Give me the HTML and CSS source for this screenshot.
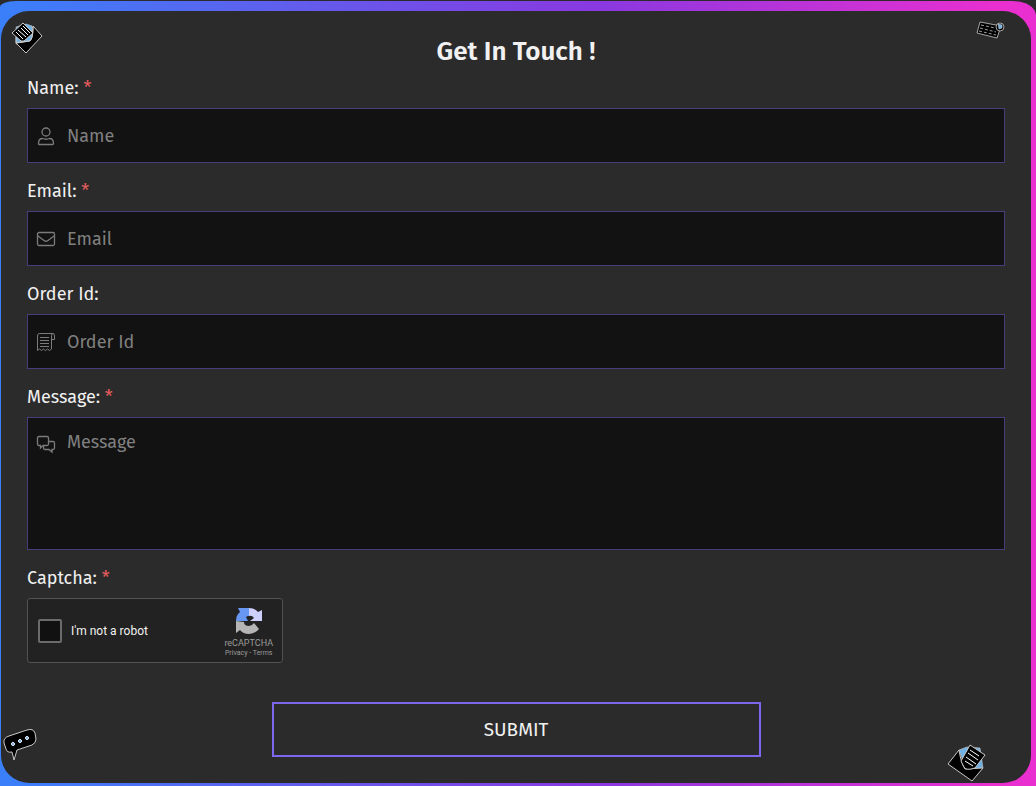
FILE: index.html
```html
<!DOCTYPE html>
<html lang="en">
<head>
	<meta charset="utf-8">
	<meta name="viewport" content="width=device-width, initial-scale=1">
	<title>Get In Touch</title>
	<link rel="stylesheet" href="styles.css">
</head>
<body>

<div class="frame">
	<main class="card">
		<!-- corner decorations -->
		<svg class="deco deco-letter" viewBox="0 0 32 32" aria-hidden="true">
			<path class="sky" d="M5 5L15 2L21 4L22 20L5 22Z"/>
			<path class="ink" d="M22 4L31 14L15 31L5 21L19 19Q22 17 22 4Z"/>
			<path class="ink" d="M1 11L12 1L22 11L13 19L10 19Z"/>
			<path class="lines" d="M5 10L12 17M7 8L15 15M10 6L17 13M12 4L19 11"/>
			<path class="edge" d="M5 15V21L18 19Q22 18 22 5"/>
		</svg>
		<svg class="deco deco-keys" viewBox="0 0 30 20" aria-hidden="true">
			<path class="ink" d="M4 2L25 6L21 18L1 13Z"/>
			<path class="dashes" d="M5 5L19 8M4 8L20 12M3 11L20 15"/>
			<circle class="ink" cx="24" cy="7" r="4"/>
			<path class="sky" d="M22 4L26 5V8L23 9Z"/>
		</svg>
		<svg class="deco deco-chat" viewBox="0 0 36 36" aria-hidden="true">
			<path class="ink" d="M7 9L25 3Q31 1 33 6L34 12Q34 16 30 18L15 23L12 33L10 25Q5 26 4 22L2 16Q1 11 7 9Z"/>
			<circle class="dot" cx="11" cy="17" r="1.500"/>
			<circle class="dot" cx="18" cy="14" r="1.500"/>
			<circle class="dot" cx="25" cy="11" r="1.500"/>
		</svg>
		<svg class="deco deco-mail" viewBox="0 0 40 40" aria-hidden="true">
			<path class="sky" d="M12 7L20 4L33 5L36 25L19 26Z"/>
			<path class="ink" d="M12 7L1 21L25 38L36 25L18 26Q14 20 12 7Z"/>
			<path class="ink" d="M23 2L38 12L28 25Q19 28 17 24L14 18Z"/>
			<path class="lines" d="M23 7L32 13M21 10L31 17M19 14L29 21M18 18L26 23"/>
		</svg>

		<h1 class="title">Get In Touch !</h1>

		<form class="form" action="#" method="post">
			<label class="label" for="name">Name: <span class="required">*</span></label>
			<div class="field">
				<svg class="icon" viewBox="0 0 20 20" aria-hidden="true">
					<circle cx="10" cy="6" r="4"/>
					<path d="M3 18.500Q2.500 18.500 2.500 17.500Q2.500 12.500 6.500 12.500Q10 14 13.500 12.500Q17.500 12.500 17.500 17.500Q17.500 18.500 16.500 18.500Z"/>
				</svg>
				<input class="input" type="text" id="name" name="name" placeholder="Name" required>
			</div>

			<label class="label" for="email">Email: <span class="required">*</span></label>
			<div class="field">
				<svg class="icon" viewBox="0 0 20 20" aria-hidden="true">
					<rect x="1.500" y="3.500" width="17" height="13" rx="1.500"/>
					<path d="M2 7L8 11.500Q10 13 12 11.500L18 7"/>
				</svg>
				<input class="input" type="email" id="email" name="email" placeholder="Email" required>
			</div>

			<label class="label" for="order">Order Id:</label>
			<div class="field">
				<svg class="icon icon-thin" viewBox="0 0 20 20" aria-hidden="true">
					<path d="M3.500 1.500H17M3.500 1.500Q1.500 1.500 1.500 4V18.500L3.500 17L5.500 18.500L7.500 17L9.500 18.500L11.500 17L13.500 18.500L15.500 17V3.500Q15.500 1.500 17 1.500Q18.500 1.500 18.500 4V7.500H15.500M4 5.500H13M4 8.500H13M4 11.500H13M4 14.500H13"/>
				</svg>
				<input class="input" type="text" id="order" name="order" placeholder="Order Id">
			</div>

			<label class="label" for="message">Message: <span class="required">*</span></label>
			<div class="field field-message">
				<svg class="icon" viewBox="0 0 20 20" aria-hidden="true">
					<path d="M7 11.500L4.500 14V11.500H3Q1.500 11.500 1.500 10V4Q1.500 2.500 3 2.500H11Q12.500 2.500 12.500 4V10Q12.500 11.500 11 11.500Z"/>
					<path d="M12.500 7.500H17Q18.500 7.500 18.500 9V14Q18.500 15.500 17 15.500H16V18L13 15.500H9Q7.500 15.500 7.500 14V11.500"/>
				</svg>
				<textarea class="input" id="message" name="message" placeholder="Message" required></textarea>
			</div>

			<label class="label" for="robot">Captcha: <span class="required">*</span></label>
			<div class="captcha">
				<input class="captcha-box" type="checkbox" id="robot" name="robot">
				<label class="captcha-text" for="robot">I'm not a robot</label>
				<div class="captcha-brand">
					<svg class="captcha-logo" viewBox="0 0 26 26" aria-hidden="true">
						<path fill="#6796f3" d="M13 0V8Q11 8 10 9L12 13H0Q0 7 4 4L2 0Z"/>
						<path fill="#cdd0fa" d="M13 0Q19 0 22 4L26 2V13H14L18 10Q16 7 13 8Z"/>
						<path fill="#b5b5b5" d="M0 13L8 14Q8 18 13 18Q16 18 18 15L23 21Q19 26 13 26Q7 26 4 22L0 25Z"/>
					</svg>
					<span class="captcha-name">reCAPTCHA</span>
					<span class="captcha-links"><a href="#privacy">Privacy</a> - <a href="#terms">Terms</a></span>
				</div>
			</div>

			<button class="submit" type="submit">SUBMIT</button>
		</form>
	</main>
</div>

</body>
</html>
```
FILE: styles.css
```css
* {
	box-sizing: border-box;
}
body {
	margin: 0;
	padding-top: 1px;
	background: #2b2b2b;
	color: #f1f1f1;
	font-family: "Fira Sans", "Noto Sans", sans-serif;
	font-size: 18px;
}
.frame {
	padding: 10px 5px 3px 1px;
	border-radius: 16px 24px 0 0 / 6px 14px 0 0;
	background: linear-gradient(90deg, #3a80fa, #8a38e0 58%, #e92fd0 96%);
}
.card {
	position: relative;
	padding: 25px 26px 26px;
	border-radius: 28px;
	background: #2b2b2b;
}
.title {
	margin: 0 0 8px;
	font-size: 26px;
	font-weight: 600;
	line-height: 32px;
	text-align: center;
}
.form {
	display: flex;
	flex-direction: column;
}
.label {
	margin-bottom: 8px;
	line-height: 24px;
}
.required {
	color: #e35d5d;
}

/* fields */
.field {
	display: flex;
	align-items: center;
	gap: 11px;
	height: 55px;
	margin-bottom: 16px;
	padding: 0 10px 0 8px;
	border: 1px solid #483d7c;
	background: #121212;
}
.field-message {
	align-items: flex-start;
	height: 133px;
	padding-top: 12px;
}
.icon {
	flex: none;
	width: 20px;
	height: 20px;
	fill: none;
	stroke: #7b7b7b;
	stroke-width: 1.3;
}
.icon-thin {
	stroke-width: 1;
}
.field-message .icon {
	margin-top: 4px;
}
.input {
	flex: 1;
	min-width: 0;
	padding: 0;
	border: 0;
	outline: 0;
	background: none;
	color: #f1f1f1;
	font: inherit;
	line-height: 24px;
}
textarea.input {
	height: 108px;
	resize: none;
}
.input::placeholder {
	color: #808080;
}

/* captcha */
.captcha {
	display: flex;
	align-items: center;
	width: 256px;
	height: 65px;
	padding: 0 9px 0 10px;
	border: 1px solid #525252;
	border-radius: 3px;
	background: #222;
	font-family: Roboto, sans-serif;
}
.captcha-box {
	appearance: none;
	width: 24px;
	height: 24px;
	margin: 0 9px 0 0;
	border: 2px solid #6b6b6b;
	border-radius: 2px;
	background: #111;
}
.captcha-box:checked {
	background: #6796f3;
}
.captcha-text {
	flex: 1;
	font-size: 12px;
}
.captcha-brand {
	display: flex;
	flex-direction: column;
	align-items: center;
	padding-top: 4px;
	color: #9b9b9b;
	font-size: 9px;
	line-height: 10px;
}
.captcha-logo {
	width: 26px;
	height: 26px;
	margin-bottom: 4px;
}
.captcha-links {
	font-size: 7px;
}
.captcha-links a {
	color: inherit;
	text-decoration: none;
}
.submit {
	align-self: center;
	width: 50%;
	height: 55px;
	margin-top: 39px;
	border: 2px solid #7b68ee;
	background: transparent;
	color: #f1f1f1;
	font: inherit;
	font-size: 19px;
	cursor: pointer;
}
.submit:hover {
	background: #7b68ee;
}

/* decorations */
.deco {
	position: absolute;
	stroke: #c8c8c8;
	stroke-width: 1;
}
.deco-letter {
	top: 11px;
	left: 10px;
	width: 32px;
}
.deco-keys {
	top: 9px;
	right: 25px;
	width: 30px;
}
.deco-chat {
	bottom: 20px;
	left: 1px;
	width: 36px;
}
.deco-mail {
	right: 44px;
	bottom: 0;
	width: 40px;
}
.deco .ink {
	fill: #000;
}
.deco .sky {
	fill: #6fb1e4;
}
.deco-letter .sky,
.deco-keys .sky,
.deco-mail .sky {
	stroke-width: 0.6;
}
.edge,
.lines,
.dashes {
	fill: none;
}
.lines {
	stroke: #fff;
}
.deco-keys {
	stroke-width: 0.8;
}
.dashes {
	stroke-dasharray: 3 2;
}
.dot {
	fill: #4d9be0;
	stroke: #fff;
}
```
